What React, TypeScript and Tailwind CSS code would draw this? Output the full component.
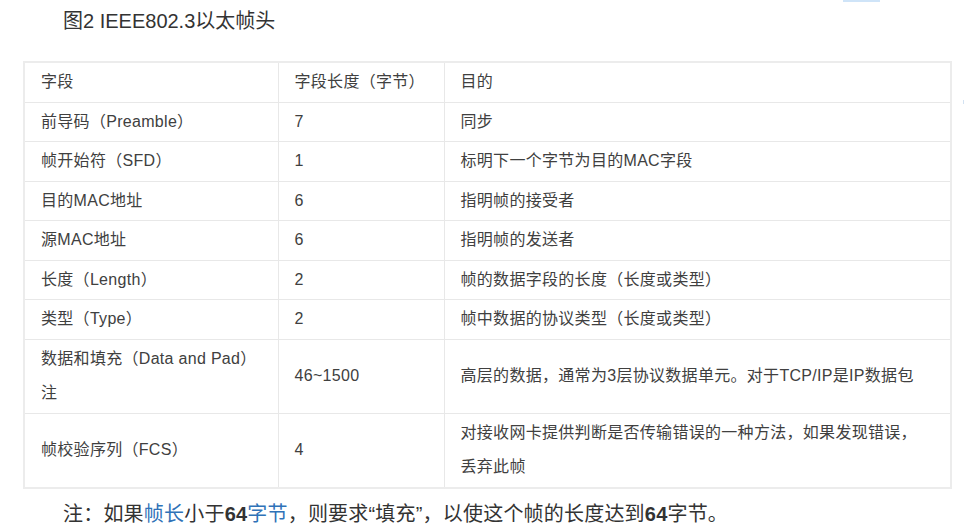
const FONT = "font-['Liberation_Sans','Noto_Sans_CJK_SC',sans-serif]";

type Row = { field: React.ReactNode; len: string; purpose: React.ReactNode };

const ROWS: Row[] = [
  { field: "前导码（Preamble）", len: "7", purpose: "同步" },
  { field: "帧开始符（SFD）", len: "1", purpose: "标明下一个字节为目的MAC字段" },
  { field: "目的MAC地址", len: "6", purpose: "指明帧的接受者" },
  { field: "源MAC地址", len: "6", purpose: "指明帧的发送者" },
  { field: "长度（Length）", len: "2", purpose: "帧的数据字段的长度（长度或类型）" },
  { field: "类型（Type）", len: "2", purpose: "帧中数据的协议类型（长度或类型）" },
  {
    field: (
      <>
        数据和填充（Data and Pad）
        <br />注
      </>
    ),
    len: "46~1500",
    purpose: "高层的数据，通常为3层协议数据单元。对于TCP/IP是IP数据包",
  },
  {
    field: "帧校验序列（FCS）",
    len: "4",
    purpose: (
      <>
        对接收网卡提供判断是否传输错误的一种方法，如果发现错误，
        <br />
        丢弃此帧
      </>
    ),
  },
];

const cell = "border border-[#e8e8e8] py-[2px] pl-[16px] leading-[34.5px] align-middle";

export default function App() {
  return (
    <div className={`relative w-[978px] h-[526px] bg-white text-[#333] ${FONT} px-[23px] pt-[9px]`}>
      {/* bits of the page around the crop */}
      <div className="absolute left-[843px] top-0 w-[37px] h-[2px] bg-[#cfe4f8]" />
      <div className="absolute left-[963px] top-[100px] w-px h-[4px] bg-[#d3e2f2]" />

      <h2 className="pl-[40px] text-[20px] leading-[24px] font-normal">图2 IEEE802.3以太帧头</h2>

      <table className="mt-[28px] w-[929px] border-collapse border-2 border-[#ececec] text-[16px] text-[#404040] tracking-[0.3px] table-fixed">
        <colgroup>
          <col className="w-[254px]" />
          <col className="w-[166px]" />
          <col />
        </colgroup>
        <tbody>
          <tr>
            <td className={cell}>字段</td>
            <td className={cell}>字段长度（字节）</td>
            <td className={cell}>目的</td>
          </tr>
          {ROWS.map((r, i) => (
            <tr key={i}>
              <td className={cell}>{r.field}</td>
              <td className={cell}>{r.len}</td>
              <td className={`${cell} pr-[8px]`}>{r.purpose}</td>
            </tr>
          ))}
        </tbody>
      </table>

      <p className="mt-[10px] pl-[40px] text-[20px] leading-[30px] tracking-[0.2px]">
        注：如果<span className="text-[#2f72b8]">帧长</span>小于<b>64</b>
        <span className="text-[#2f72b8]">字节</span>，则要求“填充”，以使这个帧的长度达到<b>64</b>字节。
      </p>
    </div>
  );
}
